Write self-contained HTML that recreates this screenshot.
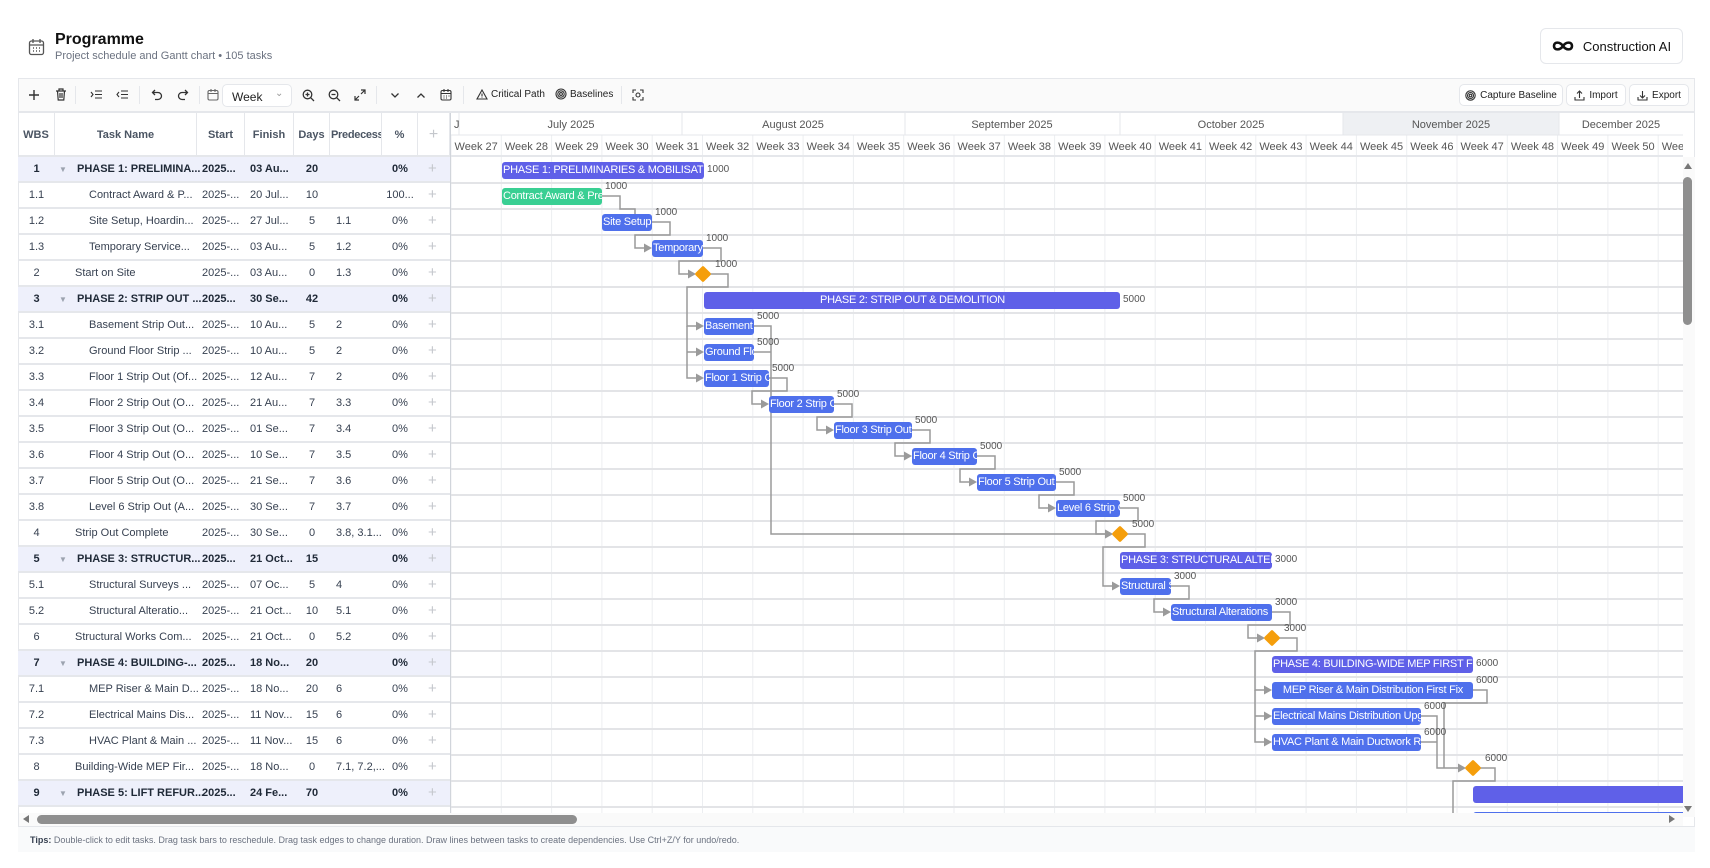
<!DOCTYPE html>
<html><head><meta charset="utf-8"><style>
*{box-sizing:border-box;margin:0;padding:0}
body{width:1710px;height:868px;background:#fff;font-family:"Liberation Sans",sans-serif;color:#374151;position:relative;overflow:hidden}
.a{position:absolute}
.tb svg{position:absolute}
.hd{position:absolute;top:113px;height:44px;border-right:1px solid #e5e7eb;font-size:11px;font-weight:bold;color:#4b5563;display:flex;align-items:center;justify-content:center;white-space:nowrap;overflow:hidden}
.row{position:absolute;left:18px;width:432px;height:26px;border-bottom:2px solid #e5e7eb;font-size:11px}
.row.ph{background:#eef0fb;font-weight:bold;color:#1f2937}
.row span{position:absolute;top:6px;white-space:nowrap}
.pl{color:#c4c7cc;font-weight:normal;font-size:15px;top:3px!important;left:410px}
.bar{position:absolute;height:17px;border-radius:3px;color:#fff;font-size:11px;letter-spacing:-0.25px;line-height:17px;white-space:nowrap;overflow:hidden;padding-left:1px}
.P{background:#5f60e8}.B{background:#4f70ec}.G{background:#39cf93}
.n{position:absolute;font-size:10px;color:#555}
.btn{position:absolute;border:1px solid #e5e7eb;border-radius:5px;background:#fff;font-size:10px;color:#222;display:flex;align-items:center;justify-content:center;gap:4px;white-space:nowrap}
</style></head><body>
<svg class="a" style="left:28px;top:38px" width="17" height="18" viewBox="0 0 17 18" fill="none" stroke="#555" stroke-width="1.3"><rect x="1.5" y="3" width="14" height="13.5" rx="2"/><path d="M1.5 7h14M5 1v4M12 1v4"/><path d="M5 10h1M8 10h1M11 10h1M5 13h1M8 13h1M11 13h1" stroke-width="1.4"/></svg>
<div class="a" style="left:55px;top:31px;font-size:16px;font-weight:bold;color:#111">Programme</div>
<div class="a" style="left:55px;top:50px;font-size:11px;color:#6b7280">Project schedule and Gantt chart • 105 tasks</div>
<div class="a" style="left:1540px;top:28px;width:143px;height:36px;border:1px solid #e5e7eb;border-radius:6px;display:flex;align-items:center;justify-content:center;gap:9px;font-size:13px;color:#111">
<svg width="22" height="12" viewBox="0 0 22 12" fill="none" stroke="#111" stroke-width="2.6"><path d="M11 6C8 1.5 2 1.5 2 6s6 4.5 9 0 9-4.5 9 0-6 4.5-9 0"/></svg>Construction AI</div>
<div class="a" style="left:18px;top:78px;width:1677px;height:749px;border:1px solid #e5e7eb;background:#fff"></div>
<div class="a" style="left:19px;top:79px;width:1675px;height:34px;background:#fafafa;border-bottom:2px solid #e5e7eb"></div>
<div class="a tb" style="left:0;top:0">
<svg style="left:28px;top:89px" width="12" height="12" stroke="#333" stroke-width="1.4"><path d="M6 1v10M1 6h10"/></svg>
<svg style="left:55px;top:88px" width="12" height="13" fill="none" stroke="#333" stroke-width="1.2"><path d="M1 3h10M4 3V1h4v2M2.5 3l.7 9h5.6l.7-9M5 5v5M7 5v5"/></svg>
<div class="a" style="left:75px;top:86px;width:1px;height:18px;background:#e5e7eb"></div>
<svg style="left:90px;top:89px" width="13" height="11" fill="none" stroke="#333" stroke-width="1.1"><path d="M1 3l2 2.5L1 8M5 2h7M5 5.5h7M5 9h7"/></svg>
<svg style="left:116px;top:89px" width="13" height="11" fill="none" stroke="#333" stroke-width="1.1"><path d="M3 3L1 5.5 3 8M5 2h7M5 5.5h7M5 9h7"/></svg>
<div class="a" style="left:139px;top:86px;width:1px;height:18px;background:#e5e7eb"></div>
<svg style="left:151px;top:89px" width="12" height="12" fill="none" stroke="#333" stroke-width="1.3"><path d="M4 1L1.5 3.5 4 6M1.5 3.5H7a3.5 3.5 0 010 7H4"/></svg>
<svg style="left:177px;top:89px" width="12" height="12" fill="none" stroke="#333" stroke-width="1.3"><path d="M8 1l2.5 2.5L8 6M10.5 3.5H5a3.5 3.5 0 000 7h3"/></svg>
<div class="a" style="left:199px;top:86px;width:1px;height:18px;background:#e5e7eb"></div>
<svg style="left:207px;top:88px" width="12" height="13" fill="none" stroke="#666" stroke-width="1.1"><rect x="1" y="2.5" width="10" height="9.5" rx="1.5"/><path d="M1 5.5h10M4 1v3M8 1v3"/></svg>
<div class="a" style="left:222px;top:84px;width:70px;height:23px;border:1px solid #e5e7eb;border-radius:5px;background:#fff;font-size:12px;color:#222;padding:5px 0 0 9px">Week<span style="position:absolute;left:52px;top:3px;color:#999;font-size:10px">⌄</span></div>
<svg style="left:302px;top:89px" width="13" height="13" fill="none" stroke="#333" stroke-width="1.3"><circle cx="5.5" cy="5.5" r="4.3"/><path d="M8.7 8.7L12 12M3.5 5.5h4M5.5 3.5v4"/></svg>
<svg style="left:328px;top:89px" width="13" height="13" fill="none" stroke="#333" stroke-width="1.3"><circle cx="5.5" cy="5.5" r="4.3"/><path d="M8.7 8.7L12 12M3.5 5.5h4"/></svg>
<svg style="left:354px;top:89px" width="12" height="12" fill="none" stroke="#333" stroke-width="1.2"><path d="M7 1h4v4M11 1L7 5M5 11H1V7M1 11l4-4"/></svg>
<div class="a" style="left:376px;top:86px;width:1px;height:18px;background:#e5e7eb"></div>
<svg style="left:390px;top:92px" width="10" height="7" fill="none" stroke="#333" stroke-width="1.3"><path d="M1.5 1.5L5 5l3.5-3.5"/></svg>
<svg style="left:416px;top:92px" width="10" height="7" fill="none" stroke="#333" stroke-width="1.3"><path d="M1.5 5.5L5 2l3.5 3.5"/></svg>
<svg style="left:440px;top:88px" width="12" height="13" fill="none" stroke="#333" stroke-width="1.1"><rect x="1" y="2.5" width="10" height="9.5" rx="1.5"/><path d="M1 5.5h10M4 1v3M8 1v3M3.5 8h1M6 8h1M8.5 8h1M3.5 10h1M6 10h1"/></svg>
<div class="a" style="left:463px;top:86px;width:1px;height:18px;background:#e5e7eb"></div>
<svg style="left:476px;top:89px" width="12" height="11" fill="none" stroke="#333" stroke-width="1.1"><path d="M6 1L11 10H1z M6 4.5v3M6 8.5v.5"/></svg>
<div class="a" style="left:491px;top:89px;font-size:10px;color:#222;white-space:nowrap">Critical Path</div>
<svg style="left:555px;top:88px" width="12" height="12" fill="none" stroke="#333" stroke-width="1.1"><circle cx="6" cy="6" r="5"/><circle cx="6" cy="6" r="3.2"/><circle cx="6" cy="6" r="1.4"/></svg>
<div class="a" style="left:570px;top:89px;font-size:10px;color:#222;white-space:nowrap">Baselines</div>
<div class="a" style="left:621px;top:86px;width:1px;height:18px;background:#e5e7eb"></div>
<svg style="left:632px;top:89px" width="12" height="12" fill="none" stroke="#333" stroke-width="1.1"><path d="M1 4V1h3M8 1h3v3M11 8v3H8M4 11H1V8"/><circle cx="6" cy="6" r="2"/></svg>
</div>
<div class="btn" style="left:1459px;top:84px;width:104px;height:22px"><svg width="11" height="11" fill="none" stroke="#333" stroke-width="1.1"><circle cx="5.5" cy="5.5" r="4.7"/><circle cx="5.5" cy="5.5" r="3"/><circle cx="5.5" cy="5.5" r="1.3"/></svg>Capture Baseline</div>
<div class="btn" style="left:1566px;top:84px;width:60px;height:22px"><svg width="11" height="11" fill="none" stroke="#333" stroke-width="1.1"><path d="M5.5 8V1M3 3.5l2.5-2.5 2.5 2.5M1 7v3h9V7"/></svg>Import</div>
<div class="btn" style="left:1629px;top:84px;width:60px;height:22px"><svg width="11" height="11" fill="none" stroke="#333" stroke-width="1.1"><path d="M5.5 1v7M3 5.5l2.5 2.5 2.5-2.5M1 7v3h9V7"/></svg>Export</div>
<div class="hd" style="left:18px;width:37px">WBS</div>
<div class="hd" style="left:55px;width:142px">Task Name</div>
<div class="hd" style="left:197px;width:48px">Start</div>
<div class="hd" style="left:245px;width:49px">Finish</div>
<div class="hd" style="left:294px;width:36px">Days</div>
<div class="hd" style="left:330px;width:52px;justify-content:flex-start;padding-left:1px;letter-spacing:-0.3px">Predecessors</div>
<div class="hd" style="left:382px;width:36px">%</div>
<div class="hd" style="left:418px;width:32px;color:#c4c7cc;font-weight:normal;font-size:16px">+</div>
<div class="a" style="left:18px;top:155px;width:432px;height:2px;background:#e5e7eb"></div>
<div id="rows"></div>
<div class="a" style="left:450px;top:113px;width:1233px;height:700px;overflow:hidden;border-left:1px solid #d1d5db">
<div class="a" style="left:-450px;top:-113px;width:1710px;height:868px">
<svg class="a" style="left:0;top:0" width="1710" height="868" id="grid"></svg>
<div id="bars"></div>
</div></div>
<div class="a" style="left:1683px;top:157px;width:12px;height:660px;background:#fafafa"></div>
<div class="a" style="left:1684px;top:163px;width:0;height:0;border-left:4.5px solid transparent;border-right:4.5px solid transparent;border-bottom:6px solid #777"></div>
<div class="a" style="left:1683px;top:177px;width:9px;height:148px;border-radius:5px;background:#8f8f8f"></div>
<div class="a" style="left:1684px;top:806px;width:0;height:0;border-left:4.5px solid transparent;border-right:4.5px solid transparent;border-top:6px solid #777"></div>
<div class="a" style="left:19px;top:813px;width:1664px;height:13px;background:#fafafa"></div>
<div class="a" style="left:23px;top:815px;width:0;height:0;border-top:4.5px solid transparent;border-bottom:4.5px solid transparent;border-right:6px solid #777"></div>
<div class="a" style="left:37px;top:815px;width:540px;height:9px;border-radius:5px;background:#8f8f8f"></div>
<div class="a" style="left:1669px;top:815px;width:0;height:0;border-top:4.5px solid transparent;border-bottom:4.5px solid transparent;border-left:6px solid #777"></div>
<div class="a" style="left:18px;top:827px;width:1677px;height:25px;background:#f9fafb"></div>
<div class="a" style="left:30px;top:835px;font-size:9px;color:#6b7280"><b style="color:#374151">Tips:</b> Double-click to edit tasks. Drag task bars to reschedule. Drag task edges to change duration. Draw lines between tasks to create dependencies. Use Ctrl+Z/Y for undo/redo.</div>
<script>
const R=[
["1","PHASE 1: PRELIMINA...","2025...","03 Au...","20","","0%",1],
["1.1","Contract Award & P...","2025-...","20 Jul...","10","","100...",0],
["1.2","Site Setup, Hoardin...","2025-...","27 Jul...","5","1.1","0%",0],
["1.3","Temporary Service...","2025-...","03 Au...","5","1.2","0%",0],
["2","Start on Site","2025-...","03 Au...","0","1.3","0%",2],
["3","PHASE 2: STRIP OUT ...","2025...","30 Se...","42","","0%",1],
["3.1","Basement Strip Out...","2025-...","10 Au...","5","2","0%",0],
["3.2","Ground Floor Strip ...","2025-...","10 Au...","5","2","0%",0],
["3.3","Floor 1 Strip Out (Of...","2025-...","12 Au...","7","2","0%",0],
["3.4","Floor 2 Strip Out (O...","2025-...","21 Au...","7","3.3","0%",0],
["3.5","Floor 3 Strip Out (O...","2025-...","01 Se...","7","3.4","0%",0],
["3.6","Floor 4 Strip Out (O...","2025-...","10 Se...","7","3.5","0%",0],
["3.7","Floor 5 Strip Out (O...","2025-...","21 Se...","7","3.6","0%",0],
["3.8","Level 6 Strip Out (A...","2025-...","30 Se...","7","3.7","0%",0],
["4","Strip Out Complete","2025-...","30 Se...","0","3.8, 3.1...","0%",2],
["5","PHASE 3: STRUCTUR...","2025...","21 Oct...","15","","0%",1],
["5.1","Structural Surveys ...","2025-...","07 Oc...","5","4","0%",0],
["5.2","Structural Alteratio...","2025-...","21 Oct...","10","5.1","0%",0],
["6","Structural Works Com...","2025-...","21 Oct...","0","5.2","0%",2],
["7","PHASE 4: BUILDING-...","2025...","18 No...","20","","0%",1],
["7.1","MEP Riser & Main D...","2025-...","18 No...","20","6","0%",0],
["7.2","Electrical Mains Dis...","2025-...","11 Nov...","15","6","0%",0],
["7.3","HVAC Plant & Main ...","2025-...","11 Nov...","15","6","0%",0],
["8","Building-Wide MEP Fir...","2025-...","18 No...","0","7.1, 7.2,...","0%",2],
["9","PHASE 5: LIFT REFUR...","2025...","24 Fe...","70","","0%",1]];
let h="";
R.forEach((r,i)=>{const ph=r[7]==1;const nx=ph?59:(r[7]==2?57:71);
h+=`<div class="row${ph?' ph':''}" style="top:${157+26*i}px"><span style="left:0;width:37px;text-align:center">${r[0]}</span>${ph?'<span style="left:41px;color:#9ca3af;font-size:8px;top:8px">▼</span>':''}<span style="left:${nx}px">${r[1]}</span><span style="left:184px">${r[2]}</span><span style="left:232px">${r[3]}</span><span style="left:276px;width:36px;text-align:center">${r[4]}</span><span style="left:318px">${r[5]}</span><span style="left:364px;width:36px;text-align:center">${r[6]}</span><span class="pl">+</span></div>`;});
document.getElementById("rows").innerHTML=h;
const W=50.3,X0=450;let g="";
g+=`<rect x="1342" y="113" width="216" height="22" fill="#eef0f3"/>`;
for(let k=0;k<26;k++){const x=X0+W*k;g+=`<line x1="${x}" y1="135" x2="${x}" y2="820" stroke="#eceef1" stroke-width="1"/>`;g+=`<text x="${x+W/2}" y="150" font-size="11" fill="#555" text-anchor="middle" font-family="Liberation Sans">Week ${27+k}</text>`;}
[458,681,904,1119,1342,1558].forEach(x=>g+=`<line x1="${x}" y1="113" x2="${x}" y2="135" stroke="#e5e7eb"/>`);
[["J",453,"start"],["July 2025",570],["August 2025",792],["September 2025",1011],["October 2025",1230],["November 2025",1450],["December 2025",1620]].forEach(m=>g+=`<text x="${m[1]}" y="128" font-size="11" fill="#555" text-anchor="${m[2]||'middle'}" font-family="Liberation Sans">${m[0]}</text>`);
g+=`<line x1="450" y1="135" x2="1700" y2="135" stroke="#e5e7eb"/><line x1="450" y1="156" x2="1700" y2="156" stroke="#e5e7eb" stroke-width="2"/>`;
for(let i=0;i<26;i++){const y=183+26*i;g+=`<line x1="450" y1="${y}" x2="1700" y2="${y}" stroke="#e3e4e7" stroke-width="2"/>`;}
const yc=i=>170+26*i,b=i=>183+26*i;
const ar=(x,y)=>`<polygon points="${x-8},${y-4.5} ${x},${y} ${x-8},${y+4.5}" fill="#9a9a9a"/>`;
let P="";const S='fill="none" stroke="#9a9a9a" stroke-width="1.5"';
const fs=(xe,i,xs,j)=>{P+=`<path d="M${xe} ${yc(i)}H${xe+18}V${b(i)}H${xs-17}V${yc(j)}H${xs-7}" ${S}/>`+ar(xs,yc(j));};
fs(601,1,651,2);fs(651,2,651,3);fs(702,3,695,4);fs(709,4,703,6);
P+=`<path d="M686 ${yc(6)}V${yc(8)}H696M686 ${yc(7)}H696" ${S}/>`+ar(703,yc(7))+ar(703,yc(8));
P+=`<path d="M753 ${yc(6)}H770V${yc(14)}H1105M753 ${yc(7)}H770" ${S}/>`+ar(1112,yc(14));
fs(768,8,768,9);fs(833,9,833,10);fs(911,10,911,11);fs(976,11,976,12);fs(1055,12,1055,13);fs(1119,13,1112,14);
fs(1126,14,1119,16);fs(1170,16,1170,17);fs(1271,17,1264,18);fs(1278,18,1271,20);
P+=`<path d="M1254 ${yc(20)}V${yc(22)}H1264M1254 ${yc(21)}H1264" ${S}/>`+ar(1271,yc(21))+ar(1271,yc(22));
P+=`<path d="M1472 ${yc(20)}H1486V${b(20)}H1443V${yc(23)}H1458M1420 ${yc(21)}H1436V${yc(23)}H1443M1420 ${yc(22)}H1436" ${S}/>`+ar(1465,yc(23));
P+=`<path d="M1479 ${yc(23)}H1494V${b(23)}H1452V830" ${S}/>`;
document.getElementById("grid").innerHTML=g+P;
const B=[[0,501,703,"P","PHASE 1: PRELIMINARIES &amp; MOBILISATION","1000"],[1,501,601,"G","Contract Award &amp; Pre-Construction","1000"],[2,601,651,"B","Site Setup","1000"],[3,651,702,"B","Temporary","1000"],[4,702,0,"M","","1000"],
[5,703,1119,"P","PHASE 2: STRIP OUT &amp; DEMOLITION","5000",1],[6,703,753,"B","Basement","5000"],[7,703,753,"B","Ground Floor","5000"],[8,703,768,"B","Floor 1 Strip Out","5000"],[9,768,833,"B","Floor 2 Strip Out","5000"],[10,833,911,"B","Floor 3 Strip Out","5000"],[11,911,976,"B","Floor 4 Strip Out","5000"],[12,976,1055,"B","Floor 5 Strip Out","5000"],[13,1055,1119,"B","Level 6 Strip Out","5000"],[14,1119,0,"M","","5000"],
[15,1119,1271,"P","PHASE 3: STRUCTURAL ALTERATIONS","3000"],[16,1119,1170,"B","Structural Surveys","3000"],[17,1170,1271,"B","Structural Alterations","3000"],[18,1271,0,"M","","3000"],
[19,1271,1472,"P","PHASE 4: BUILDING-WIDE MEP FIRST FIX","6000"],[20,1271,1472,"B","MEP Riser &amp; Main Distribution First Fix","6000",1],[21,1271,1420,"B","Electrical Mains Distribution Upgrade","6000"],[22,1271,1420,"B","HVAC Plant &amp; Main Ductwork Replacement","6000"],[23,1472,0,"M","","6000"],
[24,1472,1720,"P","",""],[25,1472,1720,"B","",""]];
let bh="";
B.forEach(t=>{const i=t[0],y=yc(i);
if(t[3]=="M"){bh+=`<div class="a" style="left:${t[1]-7}px;top:${y-7}px;width:14px;height:14px;background:#f59e0b;transform:rotate(45deg) scale(.86);border-radius:2px"></div><div class="n" style="left:${t[1]+12}px;top:${y-15}px">${t[5]}</div>`;return;}
bh+=`<div class="bar ${t[3]}" style="left:${t[1]}px;top:${y-8.5}px;width:${t[2]-t[1]}px;${t[6]?'text-align:center;':''}">${t[4]}</div>`;
if(t[5])bh+=`<div class="n" style="left:${t[2]+3}px;top:${t[3]=="P"?y-6:y-15}px">${t[5]}</div>`;});
document.getElementById("bars").innerHTML=bh;
</script>
</body></html>
